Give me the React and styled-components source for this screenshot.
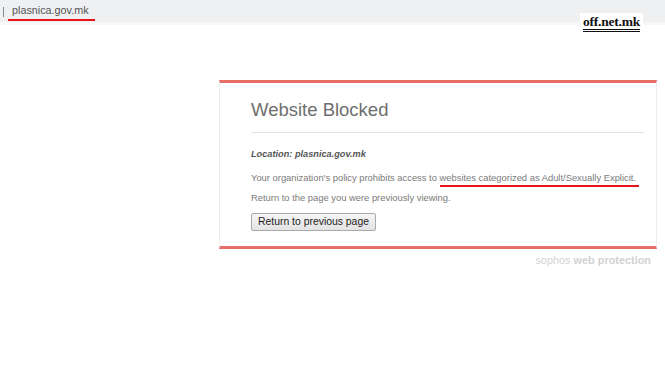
import React from "react";
import styled, { createGlobalStyle } from "styled-components";

const Global = createGlobalStyle`
  html, body { margin: 0; padding: 0; background: #fff; }
  body { font-family: "Liberation Sans", Arial, sans-serif; width: 665px; height: 380px; overflow: hidden; }
`;

const Page = styled.div`
  position: relative;
  width: 665px;
  height: 380px;
  background: #fff;
`;

const AddressBar = styled.div`
  height: 22px;
  background: #eff0f2;
  border-bottom: 3px solid #f7f7f8;
  display: flex;
  align-items: flex-start;
  padding-left: 3px;
`;

const Caret = styled.div`
  width: 1px;
  height: 10px;
  margin-top: 7px;
  background: #8a8a8a;
`;

const Url = styled.span`
  margin-left: 4px;
  margin-top: 4px;
  padding: 0 6px 2px 4px;
  font-size: 10.8px;
  line-height: 13px;
  color: #555;
  border-bottom: 2px solid #e8141a;
`;

const Watermark = styled.div`
  position: absolute;
  left: 580px;
  top: 13px;
  width: 63px;
  height: 20px;
  background: #fff;
  display: flex;
  justify-content: center;
  align-items: flex-start;
`;

const WatermarkText = styled.span`
  font-family: "Liberation Serif", "Times New Roman", serif;
  font-weight: 700;
  font-size: 13.5px;
  line-height: 14px;
  margin-top: 2px;
  color: #111;
  letter-spacing: -0.2px;
  border-bottom: 3px double #111;
`;

const Card = styled.div`
  margin: 55px 0 0 219px;
  width: 438px;
  border-top: 3px solid #e86e6a;
  border-bottom: 3px solid #e86e6a;
  border-left: 1px solid #ececec;
  border-right: 1px solid #ececec;
  padding: 16px 12px 15px 31px;
  box-sizing: border-box;
`;

const Title = styled.h1`
  margin: 0;
  font-size: 18.5px;
  line-height: 22px;
  font-weight: 400;
  color: #6e6e6e;
`;

const Divider = styled.hr`
  margin: 11px 0 0 0;
  border: 0;
  height: 1px;
  background: #e2e2e2;
`;

const Location = styled.p`
  margin: 15px 0 0 0;
  font-size: 9.2px;
  line-height: 12px;
  font-weight: 700;
  font-style: italic;
  color: #555;
`;

const Text = styled.p`
  margin: ${(p) => p.$top}px 0 0 0;
  font-size: 9.4px;
  line-height: 12px;
  color: #7a7a7a;
  white-space: nowrap;
`;

const Marked = styled.span`
  padding-bottom: 2px;
  padding-right: 3px;
  border-bottom: 2px solid #e8141a;
`;

const Button = styled.button`
  margin-top: 9px;
  height: 18px;
  width: 125px;
  padding: 0;
  font-family: "Liberation Sans", Arial, sans-serif;
  font-size: 10.4px;
  line-height: 16px;
  color: #222;
  background: linear-gradient(#f6f6f6, #e3e3e3);
  border: 1px solid #a9a9a9;
  border-radius: 2px;
  display: block;
`;

const Footer = styled.div`
  width: 651px;
  margin-top: 5px;
  text-align: right;
  font-size: 10.9px;
  line-height: 13px;
  color: #d2d2d2;
`;

const Bold = styled.b`
  font-weight: 700;
`;

export default function App() {
  return (
    <Page>
      <Global />
      <AddressBar>
        <Caret />
        <Url>plasnica.gov.mk</Url>
      </AddressBar>
      <Watermark>
        <WatermarkText>off.net.mk</WatermarkText>
      </Watermark>
      <Card>
        <Title>Website Blocked</Title>
        <Divider />
        <Location>Location: plasnica.gov.mk</Location>
        <Text $top={12}>
          Your organization's policy prohibits access to{" "}
          <Marked>websites categorized as Adult/Sexually Explicit.</Marked>
        </Text>
        <Text $top={8}>Return to the page you were previously viewing.</Text>
        <Button>Return to previous page</Button>
      </Card>
      <Footer>
        sophos <Bold>web protection</Bold>
      </Footer>
    </Page>
  );
}
